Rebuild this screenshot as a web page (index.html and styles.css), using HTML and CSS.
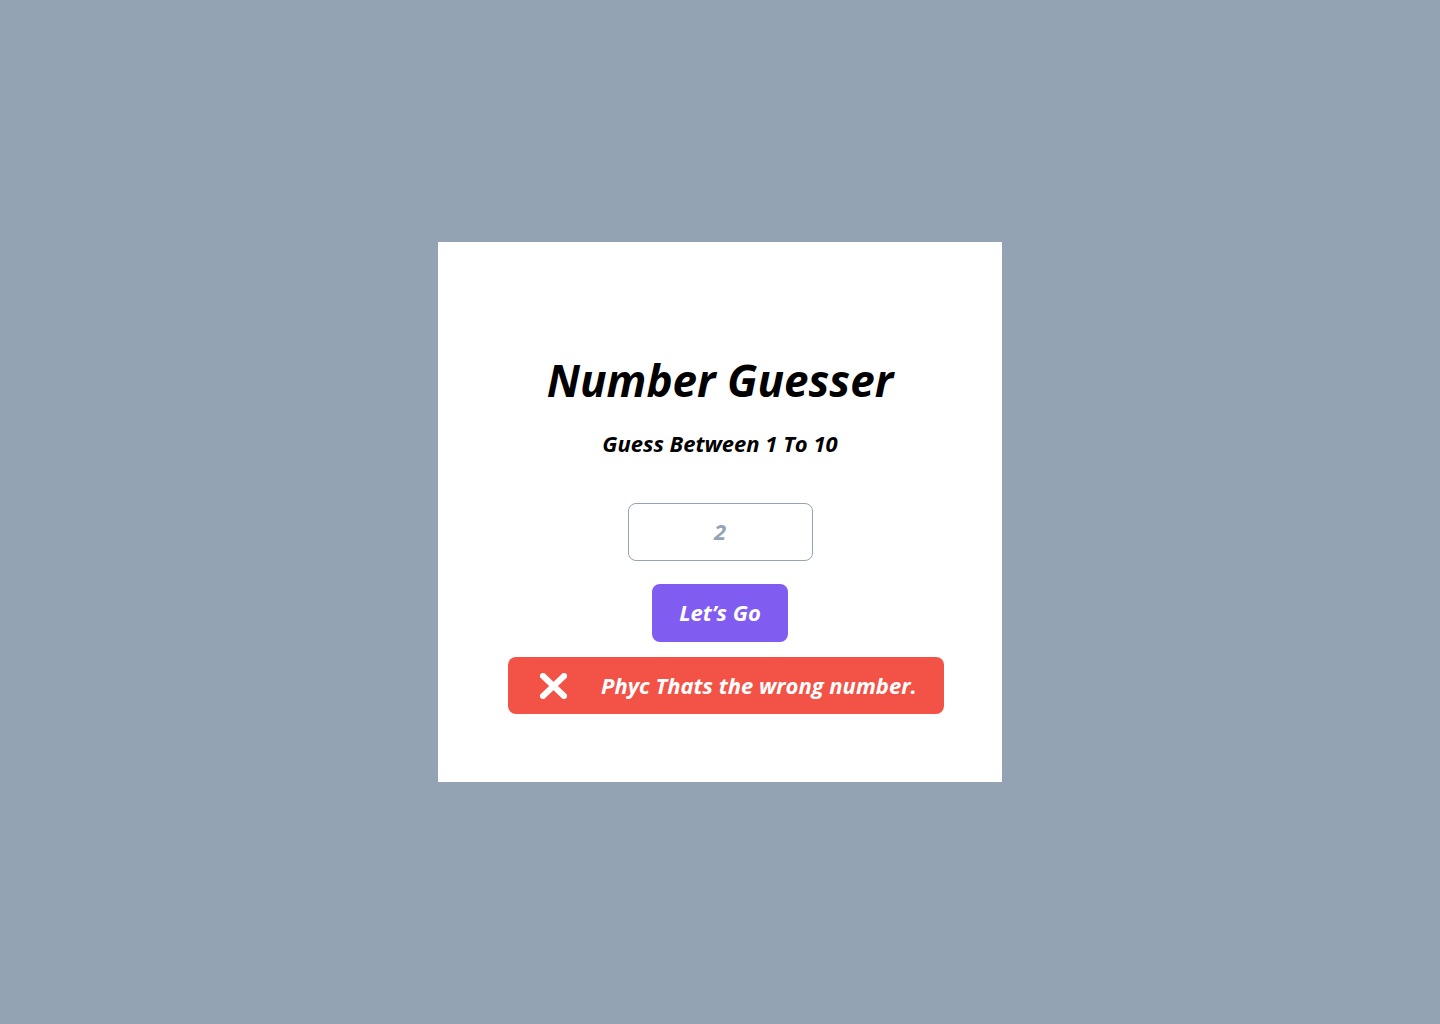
FILE: index.html
```html
<!DOCTYPE html>
<html>
<head>
<meta charset="utf-8">
<link rel="stylesheet" href="styles.css">
</head>
<body>
<div class="page">
  <div class="card">
    <h1 class="title">Number Guesser</h1>
    <p class="subtitle">Guess Between 1 To 10</p>
    <div class="input-box">2</div>
    <button class="go">Let’s Go</button>
    <div class="alert">
      <svg class="x-icon" width="27" height="26" viewBox="0 0 27 26"><path d="M3 3 L24 23 M24 3 L3 23" stroke="#fff" stroke-width="6" stroke-linecap="square"/></svg>
      <span class="alert-text">Phyc Thats the wrong number.</span>
    </div>
  </div>
</div>
</body>
</html>
```
FILE: styles.css
```css
html, body {
  margin: 0;
  padding: 0;
}
body {
  background: #94a3b3;
  font-family: "Open Sans", "Lato", sans-serif;
  font-style: italic;
  font-weight: 700;
}
.page {
  height: 1024px;
  display: flex;
  align-items: center;
  justify-content: center;
}
.card {
  width: 564px;
  height: 540px;
  background: #fff;
  display: flex;
  flex-direction: column;
  align-items: center;
  box-sizing: border-box;
  padding-top: 110px;
}
.title {
  margin: 0;
  font-size: 44px;
  line-height: 56px;
  color: #000;
  font-weight: 700;
}
.subtitle {
  margin: 21px 0 0;
  font-size: 22px;
  line-height: 28px;
  color: #000;
}
.input-box {
  margin-top: 46px;
  width: 185px;
  height: 58px;
  box-sizing: border-box;
  border: 1px solid #94a3b8;
  border-radius: 8px;
  display: flex;
  align-items: center;
  justify-content: center;
  padding-bottom: 3px;
  font-size: 22px;
  color: #94a3b8;
}
.go {
  margin-top: 23px;
  width: 136px;
  height: 58px;
  border: none;
  border-radius: 8px;
  background: #805cf0;
  color: #fff;
  font-family: inherit;
  font-style: italic;
  font-weight: 700;
  font-size: 22px;
  padding: 0 0 3px;
}
.alert {
  margin-top: 15px;
  margin-left: 12px;
  width: 436px;
  height: 57px;
  box-sizing: border-box;
  border-radius: 8px;
  background: #f35246;
  display: flex;
  align-items: center;
  padding-left: 32px;
  color: #fff;
}
.x-icon {
  flex: none;
}
.alert-text {
  margin-left: 34px;
  font-size: 22px;
  white-space: nowrap;
  padding-bottom: 2px;
}
```
